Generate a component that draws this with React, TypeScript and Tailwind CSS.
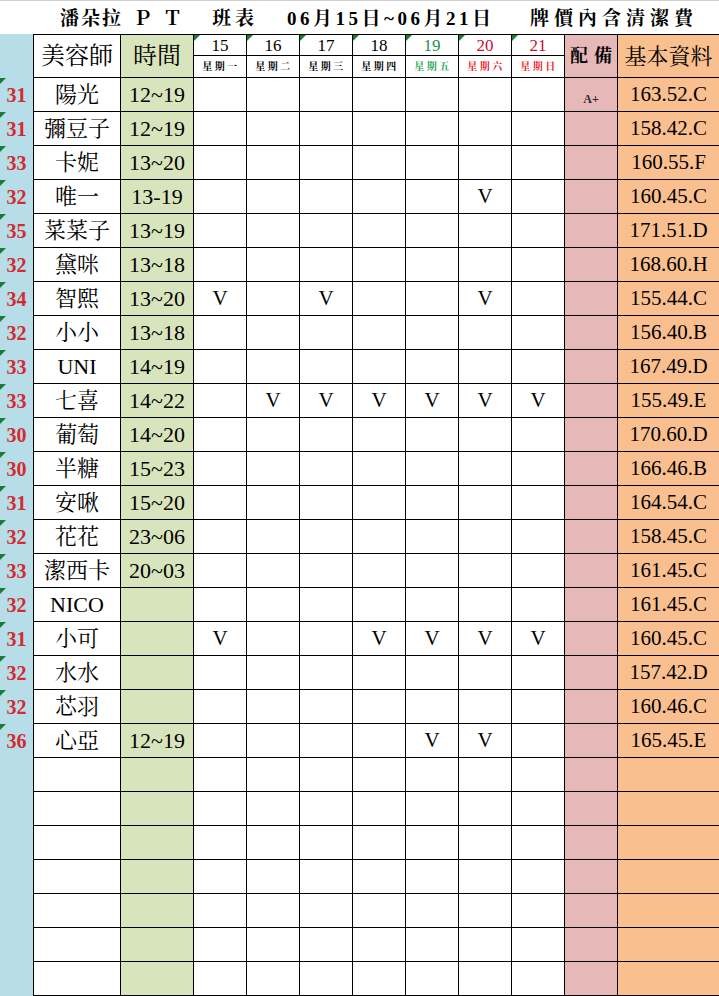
const DAYS = [
  { d: '15', w: '星期一', dc: 'text-black', wc: 'text-black' },
  { d: '16', w: '星期二', dc: 'text-black', wc: 'text-black' },
  { d: '17', w: '星期三', dc: 'text-black', wc: 'text-black' },
  { d: '18', w: '星期四', dc: 'text-black', wc: 'text-black' },
  { d: '19', w: '星期五', dc: 'text-[#17954a]', wc: 'text-[#1fa552]' },
  { d: '20', w: '星期六', dc: 'text-[#c8102e]', wc: 'text-[#ee1c25]' },
  { d: '21', w: '星期日', dc: 'text-[#c8102e]', wc: 'text-[#ee1c25]' },
];

type Row = { no: string; name: string; time: string; v: number[]; note?: string; info: string };

const ROWS: Row[] = [
  { no: '31', name: '陽光', time: '12~19', v: [], note: 'A+', info: '163.52.C' },
  { no: '31', name: '彌豆子', time: '12~19', v: [], info: '158.42.C' },
  { no: '33', name: '卡妮', time: '13~20', v: [], info: '160.55.F' },
  { no: '32', name: '唯一', time: '13-19', v: [20], info: '160.45.C' },
  { no: '35', name: '菜菜子', time: '13~19', v: [], info: '171.51.D' },
  { no: '32', name: '黛咪', time: '13~18', v: [], info: '168.60.H' },
  { no: '34', name: '智熙', time: '13~20', v: [15, 17, 20], info: '155.44.C' },
  { no: '32', name: '小小', time: '13~18', v: [], info: '156.40.B' },
  { no: '33', name: 'UNI', time: '14~19', v: [], info: '167.49.D' },
  { no: '33', name: '七喜', time: '14~22', v: [16, 17, 18, 19, 20, 21], info: '155.49.E' },
  { no: '30', name: '葡萄', time: '14~20', v: [], info: '170.60.D' },
  { no: '30', name: '半糖', time: '15~23', v: [], info: '166.46.B' },
  { no: '31', name: '安啾', time: '15~20', v: [], info: '164.54.C' },
  { no: '32', name: '花花', time: '23~06', v: [], info: '158.45.C' },
  { no: '33', name: '潔西卡', time: '20~03', v: [], info: '161.45.C' },
  { no: '32', name: 'NICO', time: '', v: [], info: '161.45.C' },
  { no: '31', name: '小可', time: '', v: [15, 18, 19, 20, 21], info: '160.45.C' },
  { no: '32', name: '水水', time: '', v: [], info: '157.42.D' },
  { no: '32', name: '芯羽', time: '', v: [], info: '160.46.C' },
  { no: '36', name: '心亞', time: '12~19', v: [19, 20], info: '165.45.E' },
];

const EMPTY_ROWS = 7;

// little green mark Excel puts in the corner of a cell
const Tri = () => (
  <span className="absolute left-0 top-0 w-0 h-0 border-t-[6px] border-r-[6px] border-t-[#1c7a34] border-r-transparent" />
);

const cell = 'relative flex items-center justify-center border-r border-b border-black h-[34px]';

export default function App() {
  return (
    <div className="w-[719px] h-[996px] overflow-hidden bg-white text-black font-['Liberation_Serif','Noto_Serif_CJK_TC','Noto_Sans_CJK_TC',serif]">
      {/* title */}
      <div className="flex items-center h-[34px] border-t border-[#cfcfcf] pt-[3px] text-[19px] font-bold whitespace-nowrap">
        <div className="w-[60px]" />
        <div className="w-[73px] tracking-[2px]">潘朵拉</div>
        <div className="w-[30px]">Ｐ</div>
        <div className="w-[49px]">Ｔ</div>
        <div className="w-[75px] tracking-[4px]">班表</div>
        <div className="w-[243px] tracking-[3.5px]">06月15日~06月21日</div>
        <div className="flex-1 tracking-[5px]">牌價內含清潔費</div>
      </div>

      <div className="grid grid-cols-[34px_87px_73px_53px_53px_53px_53px_53px_53px_53px_53px_101px]">
        {/* header */}
        <div className="h-[44px] bg-[#b7dde8] border-r border-black" />
        <div className="h-[44px] flex items-center justify-center border-t border-r border-b border-black text-[24px]">美容師</div>
        <div className="h-[44px] flex items-center justify-center border-t border-r border-b border-black bg-[#d8e4bc] text-[24px]">時間</div>
        {DAYS.map(d => (
          <div key={d.d} className="relative h-[44px] flex flex-col border-t border-r border-b border-black">
            <Tri />
            <div className={`h-[21px] flex items-center justify-center border-b border-black text-[17px] leading-none ${d.dc}`}>{d.d}</div>
            <div className={`flex-1 flex items-center justify-center pl-[2px] text-[10px] font-bold tracking-[2.5px] ${d.wc}`}>{d.w}</div>
          </div>
        ))}
        <div className="h-[44px] flex items-center justify-center gap-[6px] border-t border-r border-b border-black bg-[#e6b9b8] text-[18px] font-bold">
          <span>配</span><span>備</span>
        </div>
        <div className="h-[44px] flex items-center justify-center border-t border-b border-black bg-[#f9bf8f] text-[22px]">基本資料</div>

        {/* staff rows */}
        {ROWS.map((r, i) => (
          <Row key={i} r={r} />
        ))}

        {Array.from({ length: EMPTY_ROWS }).map((_, i) => (
          <EmptyRow key={'e' + i} />
        ))}
      </div>
    </div>
  );
}

function Row({ r }: { r: Row }) {
  return (
    <>
      <div className="relative h-[34px] flex items-center justify-center bg-[#b7dde8] border-r border-black text-[20px] font-bold text-[#d42a30]">
        <Tri />
        {r.no}
      </div>
      <div className={`${cell} text-[22px] whitespace-nowrap`}>{r.name}</div>
      <div className={`${cell} bg-[#d8e4bc] text-[22px]`}>{r.time}</div>
      {DAYS.map(d => (
        <div key={d.d} className={`${cell} text-[21px]`}>{r.v.includes(Number(d.d)) ? 'V' : ''}</div>
      ))}
      <div className={`${cell} bg-[#e6b9b8] items-end pb-[3px] text-[12px] font-bold text-[#2b2b3b]`}>{r.note}</div>
      <div className="h-[34px] flex items-center justify-center border-b border-black bg-[#f9bf8f] text-[21px]">{r.info}</div>
    </>
  );
}

function EmptyRow() {
  return (
    <>
      <div className="h-[34px] bg-[#b7dde8] border-r border-black" />
      <div className={cell} />
      <div className={`${cell} bg-[#d8e4bc]`} />
      {DAYS.map(d => (
        <div key={d.d} className={cell} />
      ))}
      <div className={`${cell} bg-[#e6b9b8]`} />
      <div className="h-[34px] border-b border-black bg-[#f9bf8f]" />
    </>
  );
}
